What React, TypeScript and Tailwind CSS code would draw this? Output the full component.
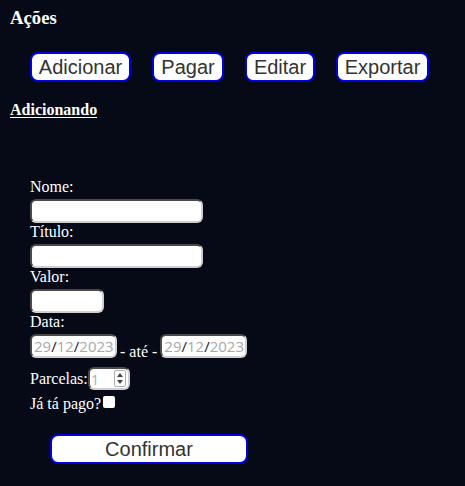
const serif = { fontFamily: '"Liberation Serif", "Times New Roman", serif' }

const inputBox =
  'block h-[24px] rounded-[6px] border-2 border-t-[#4a4a4a] border-l-[#4a4a4a] border-r-[#cfcfcf] border-b-[#cfcfcf] bg-white'

function ActionButton({ label, width }: { label: string; width: string }) {
  return (
    <button
      className={`h-[30px] ${width} rounded-[8px] border-2 border-[#0000e0] bg-white text-[20px] leading-[24px] text-[#333] font-['Liberation_Sans',Arial,sans-serif]`}
    >
      {label}
    </button>
  )
}

function DateBox() {
  return (
    <div className="flex h-[24px] w-[87px] items-center rounded-[6px] border-2 border-t-[#4a4a4a] border-l-[#4a4a4a] border-r-[#cfcfcf] border-b-[#cfcfcf] bg-white pl-[2px] font-['Open_Sans',sans-serif] text-[15px] leading-[20px] text-[#a8a8a8]">
      <span>29</span>
      <span className="text-[#1a1a3a]">/</span>
      <span>12</span>
      <span className="text-[#1a1a3a]">/</span>
      <span>2023</span>
    </div>
  )
}

export default function App() {
  return (
    <div className="min-h-[486px] bg-[#060a17] px-[10px] text-white" style={serif}>
      <h3 className="pt-[7px] text-[18.7px] font-bold leading-[21px]">Ações</h3>

      <div className="ml-[20px] mt-[24px] flex gap-[21px]">
        <ActionButton label="Adicionar" width="w-[101px]" />
        <ActionButton label="Pagar" width="w-[72px]" />
        <ActionButton label="Editar" width="w-[70px]" />
        <ActionButton label="Exportar" width="w-[93px]" />
      </div>

      <h4 className="mt-[19px] text-[16px] font-bold leading-[18px] underline underline-offset-[2px]">
        Adicionando
      </h4>

      <form className="ml-[20px] mt-[59px] text-[16px] leading-[18px]">
        <label className="block">Nome:</label>
        <div className={`${inputBox} mt-[3px] w-[173px]`} />
        <label className="block">Título:</label>
        <div className={`${inputBox} mt-[3px] w-[173px]`} />
        <label className="block">Valor:</label>
        <div className={`${inputBox} mt-[3px] w-[74px]`} />
        <label className="block">Data:</label>
        <div className="mt-[3px] flex items-end">
          <DateBox />
          <span className="-mb-[3px] px-[3px]">- até -</span>
          <DateBox />
        </div>

        <div className="mt-[9px] flex items-center">
          <span>Parcelas:</span>
          <div className="flex h-[23px] w-[42px] items-center justify-between rounded-[6px] border-2 border-t-[#4a4a4a] border-l-[#4a4a4a] border-r-[#cfcfcf] border-b-[#cfcfcf] bg-white pl-[1px] pr-[2px] font-['Open_Sans',sans-serif] text-[15px] leading-[18px] text-[#b0b0b0]">
            <span>1</span>
            <div className="flex h-[17px] w-[12px] flex-col items-center justify-center gap-[3px] rounded-[2px] border border-[#b0b0b0]">
              <svg width="6" height="4" viewBox="0 0 6 4">
                <path d="M0 4 L3 0 L6 4 Z" fill="#444" />
              </svg>
              <svg width="6" height="4" viewBox="0 0 6 4">
                <path d="M0 0 L3 4 L6 0 Z" fill="#444" />
              </svg>
            </div>
          </div>
        </div>

        <div className="mt-[5px] flex items-start">
          <span>Já tá pago?</span>
          <span className="ml-[2px] mt-[1px] block h-[12px] w-[12px] rounded-[2px] bg-white" />
        </div>

        <button
          type="button"
          className="ml-[20px] mt-[21px] block h-[30px] w-[198px] rounded-[8px] border-2 border-[#0000e0] bg-white text-[20px] leading-[24px] text-[#333] font-['Liberation_Sans',Arial,sans-serif]"
        >
          Confirmar
        </button>
      </form>
    </div>
  )
}
